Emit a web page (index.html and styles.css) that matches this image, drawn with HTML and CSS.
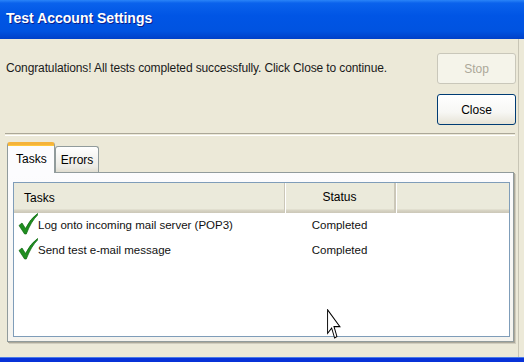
FILE: index.html
```html
<!DOCTYPE html>
<html>
<head>
    <title>Test Account Settings</title>
    <link rel="stylesheet" href="styles.css">
</head>
<body>

<div class="window">
    <div class="titlebar">Test Account Settings</div>

    <div class="content">
        <div class="top-row">
            <div class="message">Congratulations! All tests completed successfully. Click Close to continue.</div>
            <div class="buttons">
                <button class="btn btn-disabled" disabled>Stop</button>
                <button class="btn">Close</button>
            </div>
        </div>

        <div class="separator"></div>

        <div class="tabs">
            <div class="tab tab-active">Tasks</div>
            <div class="tab">Errors</div>
        </div>

        <div class="panel">
            <div class="listbox">
                <div class="list-head">
                    <div class="col col-task">Tasks</div>
                    <div class="col col-status">Status</div>
                    <div class="col col-rest"></div>
                </div>
                <div class="list-row">
                    <div class="col col-task">
                        <svg class="check" width="20" height="22" viewBox="0 0 20 22">
                            <path d="M1 12.5 L4 10 L7.5 15.5 Q12 6 19.5 0.5 L19.8 1.8 Q13 8.5 8.3 21 L6.6 21 Z" fill="#1f8f1f" stroke="#0d6510" stroke-width="0.7"/>
                        </svg>
                        Log onto incoming mail server (POP3)
                    </div>
                    <div class="col col-status">Completed</div>
                </div>
                <div class="list-row">
                    <div class="col col-task">
                        <svg class="check" width="20" height="22" viewBox="0 0 20 22">
                            <path d="M1 12.5 L4 10 L7.5 15.5 Q12 6 19.5 0.5 L19.8 1.8 Q13 8.5 8.3 21 L6.6 21 Z" fill="#1f8f1f" stroke="#0d6510" stroke-width="0.7"/>
                        </svg>
                        Send test e-mail message
                    </div>
                    <div class="col col-status">Completed</div>
                </div>
            </div>
        </div>
    </div>

    <div class="bottom-bar"></div>

    <svg class="cursor" width="14" height="32" viewBox="0 0 12 21" preserveAspectRatio="none">
        <path d="M0.5 0.5 L0.5 16 L4 12.5 L6.5 19 L8.5 18 L6 11.5 L11 11.5 Z" fill="#fff" stroke="#000" stroke-width="0.8" stroke-linejoin="miter"/>
    </svg>
</div>

</body>
</html>
```

FILE: styles.css
```css
body {
    margin: 0;
    background: #ece9d8;
    font-family: "Liberation Sans", Arial, sans-serif;
    font-size: 12px;
    color: #000;
}

.window {
    position: relative;
    width: 524px;
    height: 362px;
    display: flex;
    flex-direction: column;
    background: #ece9d8;
    overflow: hidden;
}

.titlebar {
    height: 39px;
    box-sizing: border-box;
    padding: 9px 0 0 6px;
    color: #fff;
    font-weight: bold;
    font-size: 14px;
    line-height: 18px;
    text-shadow: 1px 1px 0 #0a1e8c;
    background: linear-gradient(to bottom, #2a84f8 0%, #0a62ec 8%, #0055e5 40%, #0053e0 80%, #0040c8 100%);
}

.content {
    flex: 1;
    padding: 14px 0 0 5px;
    border-right: 5px solid #ece9d8;
    box-shadow: inset -1px 0 0 #c8c5b5;
}

.top-row {
    display: flex;
    justify-content: space-between;
}

.message {
    margin: 8px 0 0 1px;
    line-height: 14px;
    letter-spacing: -0.12px;
    color: #1a1a1a;
}

.buttons {
    display: flex;
    flex-direction: column;
    gap: 10px;
    margin-right: 3px;
}

.btn {
    width: 79px;
    height: 31px;
    font-family: "Liberation Sans", Arial, sans-serif;
    font-size: 12px;
    color: #000;
    border: 1px solid #003c74;
    border-radius: 3px;
    background: linear-gradient(to bottom, #ffffff 0%, #f7f7f4 60%, #e6e3d6 100%);
}

.btn-disabled {
    color: #aca899;
    border-color: #c9c7ba;
    background: #f5f4ea;
}

.separator {
    margin-top: 8px;
    height: 1px;
    border-top: 1px solid #aca899;
    border-bottom: 1px solid #fff;
    margin-right: 4px;
}

.tabs {
    display: flex;
    align-items: flex-end;
    margin: 5px 0 0 2px;
    height: 31px;
    position: relative;
    z-index: 1;
}

.tab {
    height: 26px;
    box-sizing: border-box;
    padding: 6px 5px 0 5px;
    border: 1px solid #919b9c;
    border-bottom: none;
    border-radius: 3px 3px 0 0;
    background: linear-gradient(to bottom, #ffffff, #ecebe5 80%, #e0ddd0);
    font-size: 12px;
}

.tab-active {
    height: 31px;
    padding: 7px 7px 0 8px;
    background: #fcfcfe;
    border-top: 3px solid #f5b33b;
    box-shadow: inset 0 1px 0 #ffc73c;
    margin-bottom: -1px;
}

.panel {
    margin: 0 0 0 2px;
    width: 507px;
    height: 170px;
    box-sizing: border-box;
    padding: 9px 3px 4px 5px;
    border: 1px solid #919b9c;
    box-shadow: 1px 1px 0 #aca899, 2px 2px 0 #d0cdbf;
    background: linear-gradient(to bottom, #fcfcfe, #f4f3ee);
}

.listbox {
    height: 100%;
    box-sizing: border-box;
    border: 1px solid #7f9db9;
    background: #fff;
}

.list-head {
    display: flex;
    height: 30px;
    box-sizing: border-box;
    background: linear-gradient(to bottom, #ebeadb 0%, #ebeadb 85%, #d6d2c2 92%, #cbc7b8 100%);
    line-height: 28px;
    font-size: 12px;
}

.list-head .col {
    border-right: 1px solid #cbc7b8;
    box-shadow: 1px 0 0 #fff;
}

.list-head .col-task {
    padding-left: 10px;
}

.col-task {
    width: 271px;
    box-sizing: border-box;
    display: flex;
    align-items: center;
}

.col-status {
    width: 109px;
    text-align: center;
}

.col-rest {
    width: 0;
}

.list-row {
    display: flex;
    height: 25px;
    line-height: 25px;
    font-size: 11.5px;
    color: #111;
}

.list-row .col-task {
    padding-left: 4px;
}

.check {
    margin-top: -3px;
    flex-shrink: 0;
}

.bottom-bar {
    height: 4px;
    background: #0832d8;
    border-top: 1px solid #4a7be8;
}

.cursor {
    position: absolute;
    left: 327px;
    top: 309px;
}
```
